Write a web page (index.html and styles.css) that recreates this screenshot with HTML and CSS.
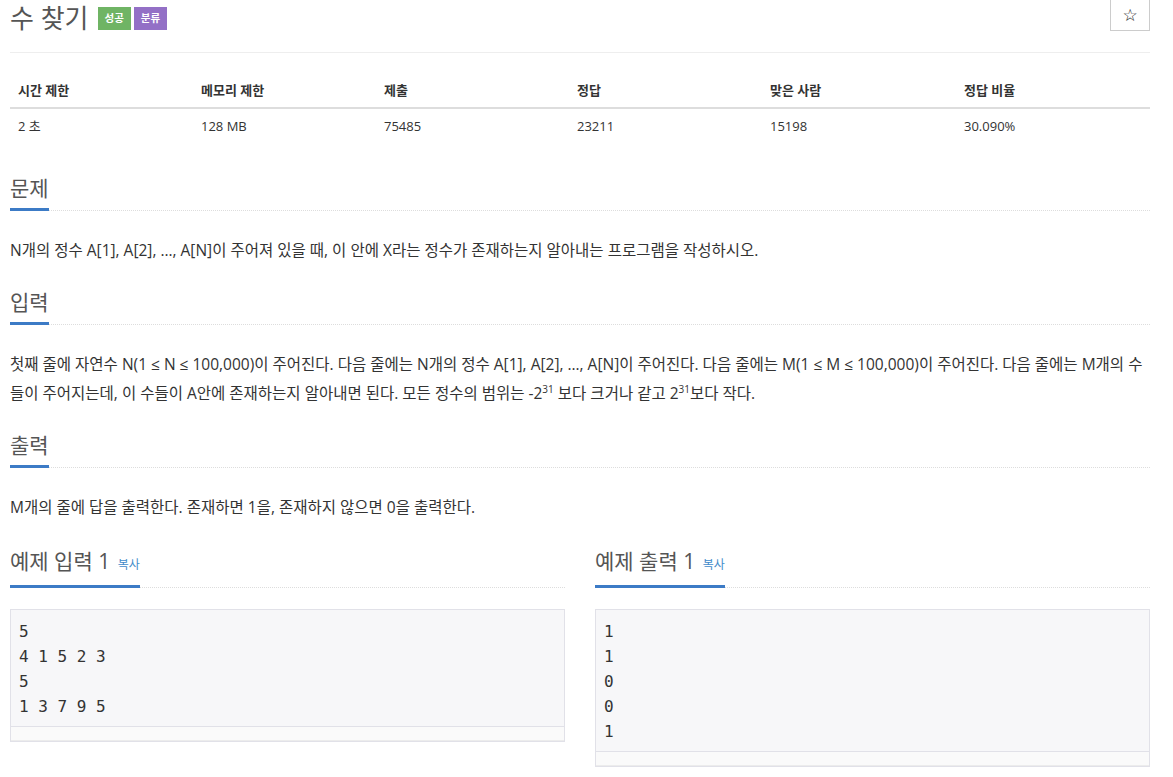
FILE: index.html
```html
<!DOCTYPE html>
<html lang="ko">
<head>
<meta charset="utf-8">
<title>수 찾기</title>
<link rel="stylesheet" href="styles.css">
</head>
<body>
<div class="page">
  <div class="page-header">
    <h1 class="title">수 찾기 <span class="badge badge-green">성공</span><span class="badge badge-purple">분류</span></h1>
    <button class="star-btn" type="button">☆</button>
  </div>

  <table class="info">
    <thead>
      <tr><th class="c1">시간 제한</th><th class="c2">메모리 제한</th><th class="c3">제출</th><th class="c4">정답</th><th class="c5">맞은 사람</th><th class="c6">정답 비율</th></tr>
    </thead>
    <tbody>
      <tr><td>2 초</td><td>128 MB</td><td>75485</td><td>23211</td><td>15198</td><td>30.090%</td></tr>
    </tbody>
  </table>

  <section class="sec sec-first">
    <h2 class="headline"><span class="hl">문제</span></h2>
    <div class="text"><p>N개의 정수 A[1], A[2], …, A[N]이 주어져 있을 때, 이 안에 X라는 정수가 존재하는지 알아내는 프로그램을 작성하시오.</p></div>
  </section>

  <section class="sec">
    <h2 class="headline"><span class="hl">입력</span></h2>
    <div class="text"><p>첫째 줄에 자연수 N(1 ≤ N ≤ 100,000)이 주어진다. 다음 줄에는 N개의 정수 A[1], A[2], …, A[N]이 주어진다. 다음 줄에는 M(1 ≤ M ≤ 100,000)이 주어진다. 다음 줄에는 M개의 수들이 주어지는데, 이 수들이 A안에 존재하는지 알아내면 된다. 모든 정수의 범위는 -2<sup>31</sup> 보다 크거나 같고 2<sup>31</sup>보다 작다.</p></div>
  </section>

  <section class="sec">
    <h2 class="headline"><span class="hl">출력</span></h2>
    <div class="text"><p>M개의 줄에 답을 출력한다. 존재하면 1을, 존재하지 않으면 0을 출력한다.</p></div>
  </section>

  <div class="samples">
    <div class="sample">
      <h2 class="headline"><span class="hl">예제 입력 1 <a class="copy">복사</a></span></h2>
      <div class="pre-box"><pre class="code">5
4 1 5 2 3
5
1 3 7 9 5</pre><div class="scroll"></div></div>
    </div>
    <div class="sample">
      <h2 class="headline"><span class="hl">예제 출력 1 <a class="copy">복사</a></span></h2>
      <div class="pre-box"><pre class="code">1
1
0
0
1</pre><div class="scroll"></div></div>
    </div>
  </div>
</div>
</body>
</html>
```

FILE: styles.css
```css
* { box-sizing: border-box; }
html, body { margin: 0; padding: 0; background: #fff; }
body {
  font-family: "Open Sans", "Noto Sans CJK KR", sans-serif;
  color: #333;
  font-size: 14px;
}
.page {
  width: 1140px;
  margin-left: 10px;
}
.page-header {
  display: flex;
  justify-content: space-between;
  align-items: flex-start;
  height: 53px;
  border-bottom: 1px solid #eee;
}
.title {
  margin: 0;
  margin-top: 1px;
  font-size: 26px;
  font-weight: 400;
  line-height: 34px;
  color: #555;
  display: flex;
  align-items: center;
}
.badge {
  display: inline-block;
  color: #fff;
  font-size: 10.5px;
  font-weight: 700;
  line-height: 23px;
  height: 23px;
  padding: 0 7px;
  margin-left: 3px;
}
.badge-green { background: #6fb464; margin-left: 9px; }
.badge-purple { background: #9370c6; }
.star-btn {
  width: 40px;
  height: 32px;
  margin-top: -1px;
  border: 1px solid #ccc;
  background: #fff;
  font-size: 17px;
  color: #222;
  padding: 0;
  font-family: "DejaVu Sans", sans-serif;
}
.info {
  width: 100%;
  border-collapse: collapse;
  margin-top: 20px;
  font-size: 13px;
}
.info th {
  text-align: left;
  font-weight: 700;
  padding: 8px 8px;
  line-height: 18px;
  border-bottom: 2px solid #ddd;
}
.info td {
  padding: 8px 8px;
  line-height: 18px;
}
.c1 { width: 183px; }
.c2 { width: 183px; }
.c3 { width: 193px; }
.c4 { width: 193px; }
.c5 { width: 194px; }
.c6 { width: 194px; }
.sec { margin-top: 22px; }
.sec-first { margin-top: 30px; }
.headline {
  margin: 0;
  font-size: 21px;
  font-weight: 400;
  color: #555;
  line-height: 30px;
  border-bottom: 1px dotted #ddd;
  display: flex;
}
.hl {
  display: inline-block;
  border-bottom: 3px solid #3c7bc6;
  margin-bottom: -1px;
  padding-bottom: 5px;
}
.copy {
  font-size: 12px;
  color: #428bca;
  margin-left: 2px;
}
.text { font-size: 15.5px; line-height: 29px; margin-top: 25px; }
.text p { margin: 0; }
.text sup { font-size: 10px; line-height: 1; }
.samples {
  display: flex;
  gap: 30px;
  margin-top: 24px;
}
.sample { flex: 1; }
.pre-box {
  margin-top: 21px;
  border: 1px solid #e1e1e8;
  background: #f7f7f9;
}
.code {
  margin: 0;
  padding: 9px 8px 7px;
  font-family: "DejaVu Sans Mono", monospace;
  font-size: 16px;
  line-height: 25px;
  color: #333;
}
.scroll {
  height: 15px;
  border-top: 1px solid #e1e1e8;
  background: #fafafa;
  border-bottom: 1px solid #ececec;
}
```
